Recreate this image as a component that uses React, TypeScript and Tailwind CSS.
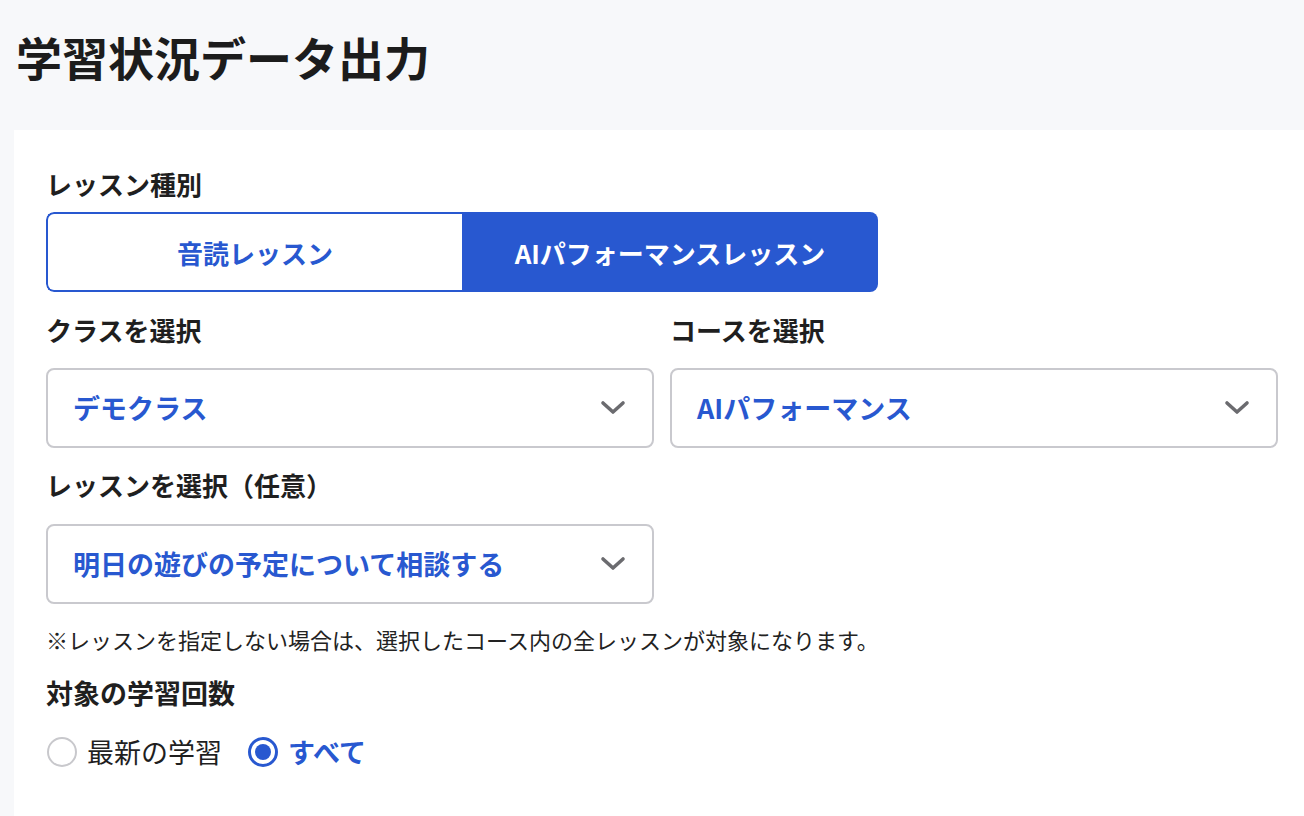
import React from "react";

function Chevron() {
  return (
    <svg width="26" height="16" viewBox="0 0 26 16" className="shrink-0">
      <polyline
        points="3,3 13,12 23,3"
        fill="none"
        stroke="#6b6b6f"
        strokeWidth="3.6"
        strokeLinecap="round"
        strokeLinejoin="round"
      />
    </svg>
  );
}

function Select({ value }: { value: string }) {
  return (
    <div className="flex h-20 items-center justify-between rounded-lg border-2 border-[#c9c9ce] bg-white pl-[25px] pr-[26px]">
      <span className="text-[27px] font-bold text-[#2858d0]">{value}</span>
      <Chevron />
    </div>
  );
}

function Label({ children }: { children: React.ReactNode }) {
  return <div className="h-9 text-[26px] font-bold leading-9 text-[#1f1f1f]">{children}</div>;
}

function Radio({ label, checked }: { label: string; checked?: boolean }) {
  return (
    <label className="flex items-center gap-[10px]">
      {checked ? (
        <span className="flex h-[30px] w-[30px] items-center justify-center rounded-full border-[3px] border-[#2858d0] bg-white">
          <span className="h-[16px] w-[16px] rounded-full bg-[#2858d0]" />
        </span>
      ) : (
        <span className="h-[30px] w-[30px] rounded-full border-2 border-[#c8c8cc] bg-white" />
      )}
      <span
        className={
          checked
            ? "text-[27px] font-bold text-[#2858d0]"
            : "text-[27px] font-normal text-[#1f1f1f]"
        }
      >
        {label}
      </span>
    </label>
  );
}

export default function App() {
  return (
    <div
      className="min-h-[816px] overflow-hidden bg-[#f7f8fa] pl-[14px] pt-[26px]"
      style={{ fontFamily: '"Noto Sans CJK JP", "Noto Sans", sans-serif' }}
    >
      {/* Page title */}
      <h1 className="h-[60px] pl-[2px] text-[46px] font-bold leading-[60px] text-[#1c1c1c]">
        学習状況データ出力
      </h1>

      {/* Form card */}
      <div className="mt-11 min-h-[700px] bg-white pl-8 pr-[26px] pt-9">
        <Label>レッスン種別</Label>
        <div className="mt-[10px] grid h-20 w-[832px] grid-cols-2 overflow-hidden rounded-lg">
          <button className="rounded-l-lg border-2 border-r-0 border-[#2858d0] bg-white text-[26px] font-bold text-[#2858d0]">
            音読レッスン
          </button>
          <button className="bg-[#2858d0] text-[26px] font-bold text-white">
            AIパフォーマンスレッスン
          </button>
        </div>

        <div className="mt-5 grid grid-cols-2 gap-4">
          <div>
            <Label>クラスを選択</Label>
            <div className="mt-5">
              <Select value="デモクラス" />
            </div>
          </div>
          <div>
            <Label>コースを選択</Label>
            <div className="mt-5">
              <Select value="AIパフォーマンス" />
            </div>
          </div>
        </div>

        <div className="mt-[19px] grid grid-cols-2 gap-4">
          <div>
            <Label>レッスンを選択（任意）</Label>
            <div className="mt-[21px]">
              <Select value="明日の遊びの予定について相談する" />
            </div>
          </div>
        </div>

        <p className="mt-[19px] h-8 text-[22px] leading-8 text-[#222]">
          ※レッスンを指定しない場合は、選択したコース内の全レッスンが対象になります。
        </p>

        <div className="mt-5 h-9 text-[27px] font-bold leading-9 text-[#1f1f1f]">
          対象の学習回数
        </div>
        <div className="mt-[23px] flex h-9 items-center gap-[26px] pl-px">
          <Radio label="最新の学習" />
          <Radio label="すべて" checked />
        </div>
      </div>
    </div>
  );
}
